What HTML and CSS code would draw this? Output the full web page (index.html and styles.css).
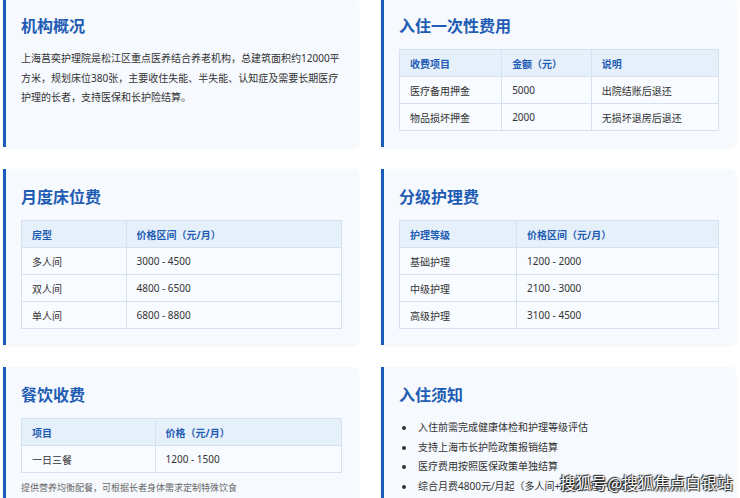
FILE: index.html
```html
<!DOCTYPE html>
<html lang="zh-CN">
<head>
<meta charset="utf-8">
<title>上海莒奕护理院 收费标准</title>
<link rel="stylesheet" href="styles.css">
</head>
<body>
<div class="grid">
  <section class="card">
    <h2 class="card-title">机构概况</h2>
    <p class="intro">上海莒奕护理院是松江区重点医养结合养老机构，总建筑面积约12000平方米，规划床位380张，主要收住失能、半失能、认知症及需要长期医疗护理的长者，支持医保和长护险结算。</p>
  </section>
  <section class="card">
    <h2 class="card-title">入住一次性费用</h2>
    <table class="fee">
      <thead><tr><th>收费项目</th><th>金额（元）</th><th>说明</th></tr></thead>
      <tbody>
        <tr><td>医疗备用押金</td><td>5000</td><td>出院结账后退还</td></tr>
        <tr><td>物品损坏押金</td><td>2000</td><td>无损坏退房后退还</td></tr>
      </tbody>
    </table>
  </section>
  <section class="card">
    <h2 class="card-title">月度床位费</h2>
    <table class="fee">
      <thead><tr><th>房型</th><th>价格区间（元/月）</th></tr></thead>
      <tbody>
        <tr><td>多人间</td><td>3000 - 4500</td></tr>
        <tr><td>双人间</td><td>4800 - 6500</td></tr>
        <tr><td>单人间</td><td>6800 - 8800</td></tr>
      </tbody>
    </table>
  </section>
  <section class="card">
    <h2 class="card-title">分级护理费</h2>
    <table class="fee">
      <thead><tr><th>护理等级</th><th>价格区间（元/月）</th></tr></thead>
      <tbody>
        <tr><td>基础护理</td><td>1200 - 2000</td></tr>
        <tr><td>中级护理</td><td>2100 - 3000</td></tr>
        <tr><td>高级护理</td><td>3100 - 4500</td></tr>
      </tbody>
    </table>
  </section>
  <section class="card">
    <h2 class="card-title">餐饮收费</h2>
    <table class="fee">
      <thead><tr><th>项目</th><th>价格（元/月）</th></tr></thead>
      <tbody>
        <tr><td>一日三餐</td><td>1200 - 1500</td></tr>
      </tbody>
    </table>
    <p class="note">提供营养均衡配餐，可根据长者身体需求定制特殊饮食</p>
  </section>
  <section class="card">
    <h2 class="card-title">入住须知</h2>
    <ul class="rules">
      <li>入住前需完成健康体检和护理等级评估</li>
      <li>支持上海市长护险政策报销结算</li>
      <li>医疗费用按照医保政策单独结算</li>
      <li>综合月费4800元/月起（多人间+基础护理+餐费）</li>
    </ul>
  </section>
</div>
<div class="watermark">搜狐号@搜狐焦点白银站</div>
</body>
</html>
```
FILE: styles.css
```css
html, body {
  margin: 0;
  padding: 0;
  background: #ffffff;
  font-family: "Noto Sans", "Noto Sans CJK SC", sans-serif;
  color: #333333;
  overflow: hidden;
}
.grid {
  display: grid;
  grid-template-columns: 356px 355px;
  column-gap: 22px;
  row-gap: 22px;
  margin: -2px 0 0 3px;
  align-items: start;
}
.card {
  background: #f6f9fe;
  border-left: 3px solid #1a5cb8;
  border-radius: 0 6px 6px 0;
  box-shadow: 0 1px 3px rgba(30, 60, 110, 0.06);
  padding: 18px 17px 16px 15px;
  align-self: stretch;
}
.card-title {
  margin: 0 0 13px;
  font-size: 16px;
  line-height: 20px;
  font-weight: 700;
  color: #1f5cb3;
}
.intro {
  margin: 0;
  font-size: 10px;
  line-height: 19.7px;
  color: #333333;
}
.fee {
  width: 100%;
  border-collapse: collapse;
  font-size: 10px;
}
.fee th, .fee td {
  border: 1px solid #d4e1f0;
  padding: 0 10px;
  height: 26px;
  text-align: left;
  white-space: nowrap;
}
.fee th {
  background: #e6f0fb;
  color: #1f5cb3;
  font-weight: 700;
}
.fee td {
  background: #f8fbff;
  color: #333333;
}
.note {
  margin: 9px 0 0;
  font-size: 9px;
  line-height: 12px;
  color: #666666;
}
.rules {
  margin: 0;
  padding: 0 0 0 17px;
  font-size: 10px;
  line-height: 19.7px;
  color: #333333;
}
.rules li {
  padding-left: 2px;
}
.watermark {
  position: absolute;
  left: 560px;
  top: 472px;
  font-family: "Noto Sans CJK SC", sans-serif;
  font-size: 15.5px;
  line-height: 20px;
  color: #ffffff;
  text-shadow: 0 0 2px #222, 1px 1px 1px #222, -1px -1px 1px #222;
  letter-spacing: 0.3px;
}
```
